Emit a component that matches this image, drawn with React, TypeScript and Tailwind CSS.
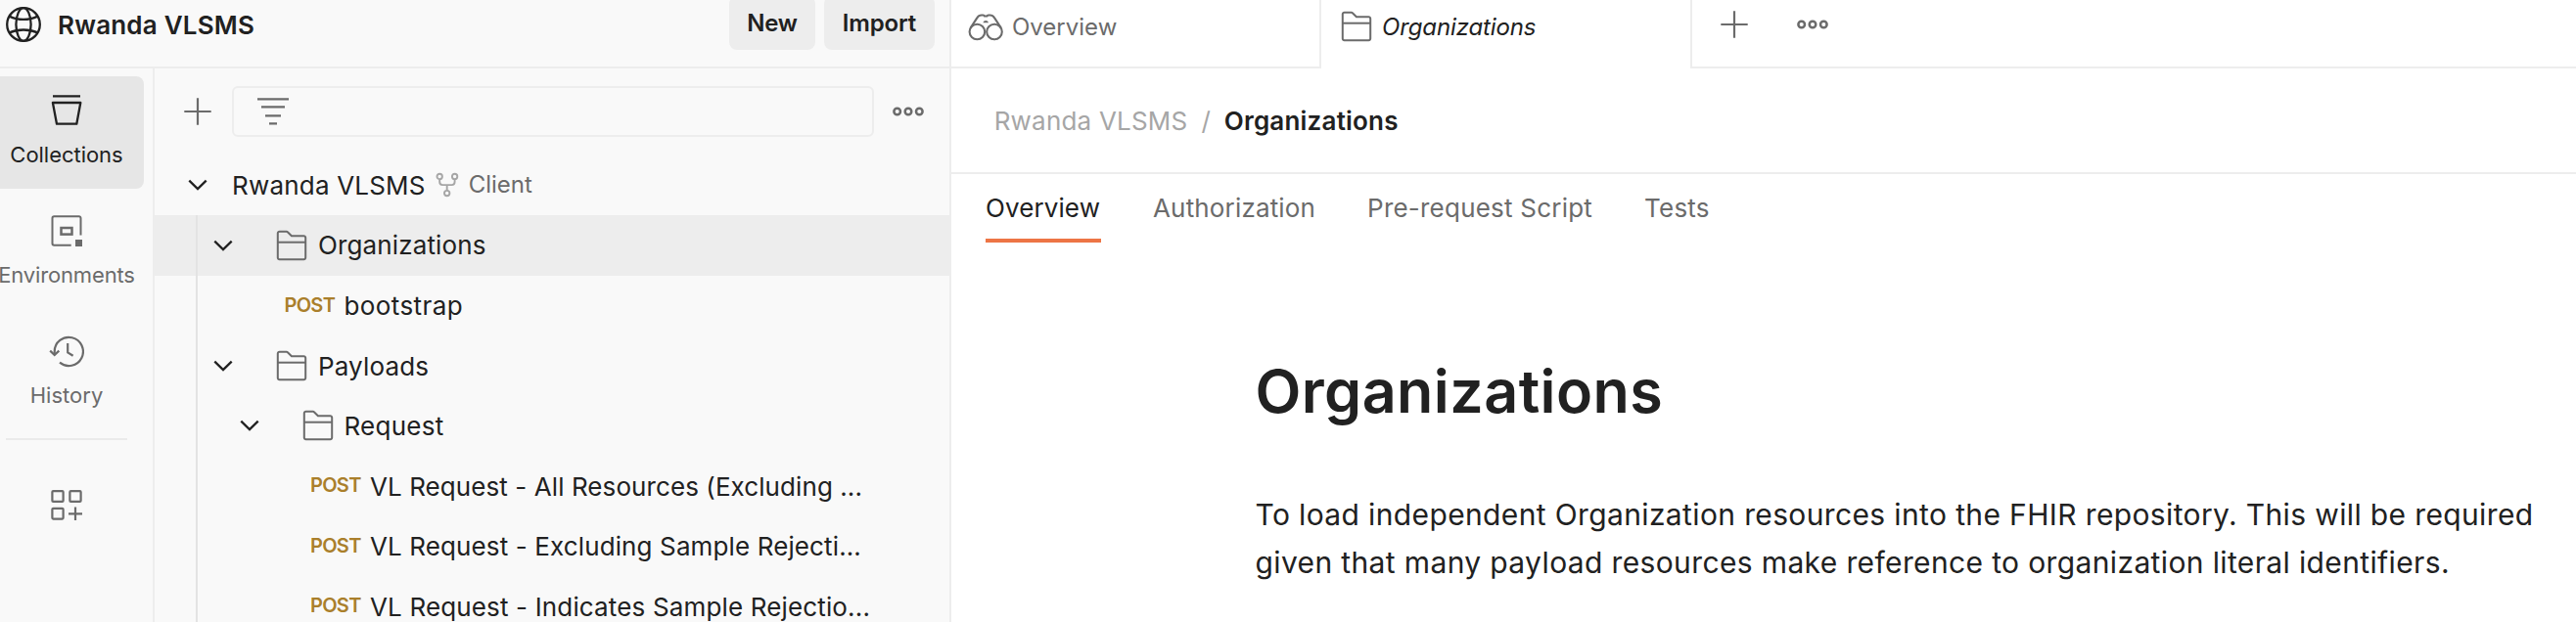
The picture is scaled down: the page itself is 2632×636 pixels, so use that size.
import React from "react";

function GlobeIcon() {
  return (
    <svg width="38" height="38" viewBox="0 0 38 38" fill="none" stroke="#212121" strokeWidth="2.3" className="shrink-0">
      <circle cx="19" cy="19" r="16.8" />
      <ellipse cx="19" cy="19" rx="7.6" ry="16.8" />
      <path d="M4.6 10.6C9 12.8 14 13.9 19 13.9s10-1.1 14.4-3.3M4.6 27.4C9 25.4 14 24.5 19 24.5s10 .9 14.4 2.9" />
    </svg>
  );
}

function CollectionsIcon() {
  return (
    <svg width="36" height="36" viewBox="0 0 36 36" fill="none" stroke="#212121" strokeWidth="2.3">
      <path d="M4 3.4h28M3.9 10h28.4l-4 21.7H8z" strokeLinejoin="round" />
    </svg>
  );
}

function EnvironmentsIcon() {
  return (
    <svg width="36" height="36" viewBox="0 0 36 36" fill="none" stroke="#6b6b6b" strokeWidth="2">
      <path d="M32.5 22.5V5a1.8 1.8 0 0 0-1.8-1.8H5.3A1.8 1.8 0 0 0 3.5 5v26a1.8 1.8 0 0 0 1.8 1.8h17.4" />
      <rect x="12.5" y="15" width="11" height="6.6" strokeWidth="2.5" />
      <rect x="27" y="27" width="7" height="7" fill="#6b6b6b" stroke="none" />
    </svg>
  );
}

function HistoryIcon() {
  return (
    <svg width="36" height="36" viewBox="0 0 36 36" fill="none" stroke="#6b6b6b" strokeWidth="2.2">
      <path d="M5.7 21.6V18.4A14.6 14.6 0 1 1 11 29.7" />
      <path d="M1.2 17.6l4.5 4.4 4.6-4.4M19.2 10v9.4l5.4 3.4" />
    </svg>
  );
}

function AddBlockIcon() {
  return (
    <svg width="36" height="36" viewBox="0 0 36 36" fill="none" stroke="#6b6b6b" strokeWidth="2.2">
      <rect x="3.4" y="3.1" width="11.2" height="10.8" rx="1" />
      <rect x="21.4" y="3.1" width="11.2" height="10.8" rx="1" />
      <rect x="3.4" y="20.8" width="11.2" height="10.8" rx="1" />
      <path d="M20 26.3h14M27 19.6v13.4" />
    </svg>
  );
}

function PlusIcon() {
  return (
    <svg width="28" height="28" viewBox="0 0 28 28" fill="none" stroke="#6b6b6b" strokeWidth="2.2" className="shrink-0">
      <path d="M.3 14h27.4M14 .3v27.4" />
    </svg>
  );
}

function MoreIcon() {
  return (
    <svg width="32" height="12" viewBox="0 0 32 12" fill="none" stroke="#6b6b6b" strokeWidth="2.5" className="shrink-0">
      <circle cx="4.7" cy="6" r="3.3" />
      <circle cx="16" cy="6" r="3.3" />
      <circle cx="27.3" cy="6" r="3.3" />
    </svg>
  );
}

function FilterIcon() {
  return (
    <svg width="32" height="30" viewBox="0 0 32 30" fill="none" stroke="#6b6b6b" strokeWidth="2.4">
      <path d="M0 2.4h32M4 10.4h24M8 19.4h16M12 27.4h8" />
    </svg>
  );
}

function ChevronIcon() {
  return (
    <svg width="20" height="12" viewBox="0 0 20 12" fill="none" stroke="#212121" strokeWidth="2.3" className="shrink-0">
      <path d="M1.3 1.6L10 10.1l8.7-8.5" />
    </svg>
  );
}

function FolderIcon() {
  return (
    <svg width="32" height="32" viewBox="0 0 32 32" fill="none" stroke="#6b6b6b" strokeWidth="2" className="shrink-0">
      <path d="M3.6 1.8h7.2a1.5 1.5 0 0 1 1.1.5l4 4h12.5a1.8 1.8 0 0 1 1.8 1.8v20.3a1.8 1.8 0 0 1-1.8 1.8H3.6a1.8 1.8 0 0 1-1.8-1.8V3.6a1.8 1.8 0 0 1 1.8-1.8z" />
      <path d="M1.8 12.7h28.4" />
    </svg>
  );
}

function ForkIcon() {
  return (
    <svg width="24" height="26" viewBox="0 0 24 26" fill="none" stroke="#a6a6a6" strokeWidth="1.9" className="shrink-0">
      <circle cx="4.2" cy="4.4" r="2.7" />
      <circle cx="19.6" cy="4.4" r="2.7" />
      <circle cx="11.7" cy="21.6" r="2.7" />
      <path d="M4.2 7.2v2.9a3 3 0 0 0 3 3h9.4a3 3 0 0 0 3-3V7.2M11.7 13.1v5.8" />
    </svg>
  );
}

function BinocularsIcon() {
  return (
    <svg width="36" height="28" viewBox="0 0 36 28" fill="none" stroke="#6b6b6b" strokeWidth="2.1" className="shrink-0">
      <circle cx="9.4" cy="18.5" r="7.8" />
      <circle cx="27" cy="18.5" r="7.8" />
      <path d="M2.6 14.6L9.4 4.1q1.6-2.6 4.4-2.6h1.8q1 0 1.4 1h2.4q.4-1 1.4-1h1.8q2.8 0 4.4 2.6l6.8 10.5" />
      <path d="M15.4 9.2a2.9 3 0 0 1 5.6 0z" fill="#6b6b6b" stroke="none" />
    </svg>
  );
}

function SideItem({ label, icon, active, labelClass }: { label: string; icon: React.ReactNode; active?: boolean; labelClass: string }) {
  return (
    <div className={`mb-2 flex h-[115px] w-[158px] flex-col items-center rounded-lg pt-[17px] ${active ? "bg-[#e6e6e6] text-[#212121]" : "text-[#6b6b6b]"}`}>
      {icon}
      <span className={`mt-[14px] text-[22px] leading-[26px] ${labelClass}`}>{label}</span>
    </div>
  );
}

function FolderRow({ name, rowClass, nameClass }: { name: string; rowClass: string; nameClass: string }) {
  return (
    <div className={`flex h-[61.5px] items-center ${rowClass}`}>
      <ChevronIcon />
      <div className="ml-[44px] flex">
        <FolderIcon />
      </div>
      <span className={`ml-[10.7px] ${nameClass}`}>{name}</span>
    </div>
  );
}

function RequestRow({ name, rowClass, nameClass }: { name: string; rowClass: string; nameClass: string }) {
  return (
    <div className={`flex h-[61.5px] items-center whitespace-nowrap ${rowClass}`}>
      <span className="w-[61px] shrink-0 pb-[1.5px] text-[20px] leading-[26px] font-semibold tracking-[-0.7px] text-[#aa7f2b]">POST</span>
      <span className={`pt-[1.5px] ${nameClass}`}>{name}</span>
    </div>
  );
}

export default function App() {
  return (
    <div className="flex h-[636px] w-[2632px] overflow-hidden bg-white font-['Inter',sans-serif] text-[26px] leading-[32px] text-[#212121]">
      <aside className="flex w-[972px] shrink-0 flex-col border-r-2 border-[#ededed] bg-[#f9f9f9]">
        <header className="flex h-[70px] shrink-0 justify-between border-b-2 border-[#ededed] pr-[15px] pl-[5px]">
          <div className="flex h-[50px] items-center">
            <GlobeIcon />
            <span className="ml-[16px] pt-[1px] font-semibold tracking-[0.2px]">Rwanda VLSMS</span>
          </div>
          <div className="-mt-1 flex gap-[9px] text-[24px] font-semibold">
            <button className="flex h-[55px] w-[88px] items-center justify-center rounded-lg bg-[#ededed] tracking-[-0.3px]">New</button>
            <button className="flex h-[55px] w-[113px] items-center justify-center rounded-lg bg-[#ededed] tracking-[-0.16px]">Import</button>
          </div>
        </header>

        <div className="flex min-h-0 flex-1">
          <nav className="flex w-[158px] shrink-0 flex-col overflow-hidden border-r-2 border-[#ededed] pt-2">
            <div className="-ml-[11px] flex w-[158px] flex-col">
              <SideItem label="Collections" icon={<CollectionsIcon />} active labelClass="tracking-[-0.03px]" />
              <SideItem label="Environments" icon={<EnvironmentsIcon />} labelClass="tracking-[-0.15px]" />
              <SideItem label="History" icon={<HistoryIcon />} labelClass="tracking-[0.03px]" />
              <div className="mt-[1px] ml-[17px] h-0.5 w-[124px] bg-[#ebebeb]" />
              <div className="mt-[49px] flex justify-center">
                <AddBlockIcon />
              </div>
            </div>
          </nav>

          <section className="flex min-w-0 flex-1 flex-col">
            <div className="flex h-[88px] shrink-0 items-center pl-[30px]">
              <PlusIcon />
              <div className="ml-[21px] flex h-[52px] w-[656px] items-center rounded-md border-2 border-[#ededed] pl-[24px]">
                <FilterIcon />
              </div>
              <div className="ml-[19px] flex">
                <MoreIcon />
              </div>
            </div>

            <div className="relative mt-[0.5px] -mr-0.5">
              <div className="flex h-[61.5px] items-center pl-[34px]">
                <ChevronIcon />
                <span className="ml-[25px] pt-[1.5px] tracking-[0.2px]">Rwanda VLSMS</span>
                <div className="ml-[10.5px] flex">
                  <ForkIcon />
                </div>
                <span className="ml-[9.5px] pb-[1.5px] text-[24px] text-[#6b6b6b]">Client</span>
              </div>
              <FolderRow name="Organizations" rowClass="bg-[#ededed] pl-[60.3px]" nameClass="tracking-[0.13px]" />
              <RequestRow name="bootstrap" rowClass="pl-[132.5px]" nameClass="tracking-[0.4px]" />
              <FolderRow name="Payloads" rowClass="pl-[60.3px]" nameClass="pt-[1.5px] tracking-[0.15px]" />
              <FolderRow name="Request" rowClass="pl-[86.7px]" nameClass="pt-[1.5px] tracking-[0.28px]" />
              <RequestRow name="VL Request - All Resources (Excluding ..." rowClass="pl-[159px]" nameClass="tracking-[0.08px]" />
              <RequestRow name="VL Request - Excluding Sample Rejecti..." rowClass="pl-[159px]" nameClass="tracking-[0.12px]" />
              <RequestRow name="VL Request - Indicates Sample Rejectio..." rowClass="pl-[159px]" nameClass="tracking-[0.15px]" />
              <div className="absolute top-[61.5px] bottom-0 left-[42px] w-0.5 bg-[#e3e3e3]" />
            </div>
          </section>
        </div>
      </aside>

      <main className="flex min-w-0 flex-1 flex-col">
        <div className="flex h-[70px] shrink-0 text-[24px]">
          <div className="flex w-[378px] border-r-2 border-b-2 border-[#ededed] pt-[11px] pl-[17px] text-[#6b6b6b]">
            <div className="pt-[3px]">
              <BinocularsIcon />
            </div>
            <span className="ml-[9px] pt-[1px]">Overview</span>
          </div>
          <div className="flex w-[377px] pt-[11px] pl-[19.5px]">
            <FolderIcon />
            <span className="ml-[10.5px] pt-[1px] tracking-[-0.13px] italic">Organizations</span>
          </div>
          <div className="flex flex-1 border-b-2 border-l-2 border-[#ededed] pl-[29px]">
            <div className="flex h-[49px] items-center gap-[50px]">
              <PlusIcon />
              <MoreIcon />
            </div>
          </div>
        </div>

        <div className="flex h-[108px] shrink-0 items-center border-b-2 border-[#ededed] pt-[1px] pl-[43.7px] text-[#a6a6a6]">
          <span className="tracking-[0.2px]">Rwanda VLSMS</span>
          <span className="ml-[14px]">/</span>
          <span className="ml-[14px] font-semibold tracking-[0.2px] text-[#212121]">Organizations</span>
        </div>

        <div className="flex h-[70px] shrink-0 gap-[53px] pl-[35px] text-[#6b6b6b]">
          <span className="w-[118px] border-b-4 border-[#ed7545] pt-[19px] tracking-[0.1px] text-[#212121]">Overview</span>
          <span className="pt-[19px] tracking-[0.16px]">Authorization</span>
          <span className="pt-[19px] tracking-[0.22px]">Pre-request Script</span>
          <span className="pt-[19px] tracking-[0.2px]">Tests</span>
        </div>

        <article className="pl-[310.5px]">
          <h1 className="mt-[116px] text-[61px] leading-[72px] font-semibold tracking-[0.42px]">Organizations</h1>
          <p className="mt-[66px] text-[30px] leading-[49px] tracking-[0.367px] whitespace-nowrap">
            To load independent Organization resources into the FHIR repository. This will be required
            <br />
            given that many payload resources make reference to organization literal identifiers.
          </p>
        </article>
      </main>
    </div>
  );
}
